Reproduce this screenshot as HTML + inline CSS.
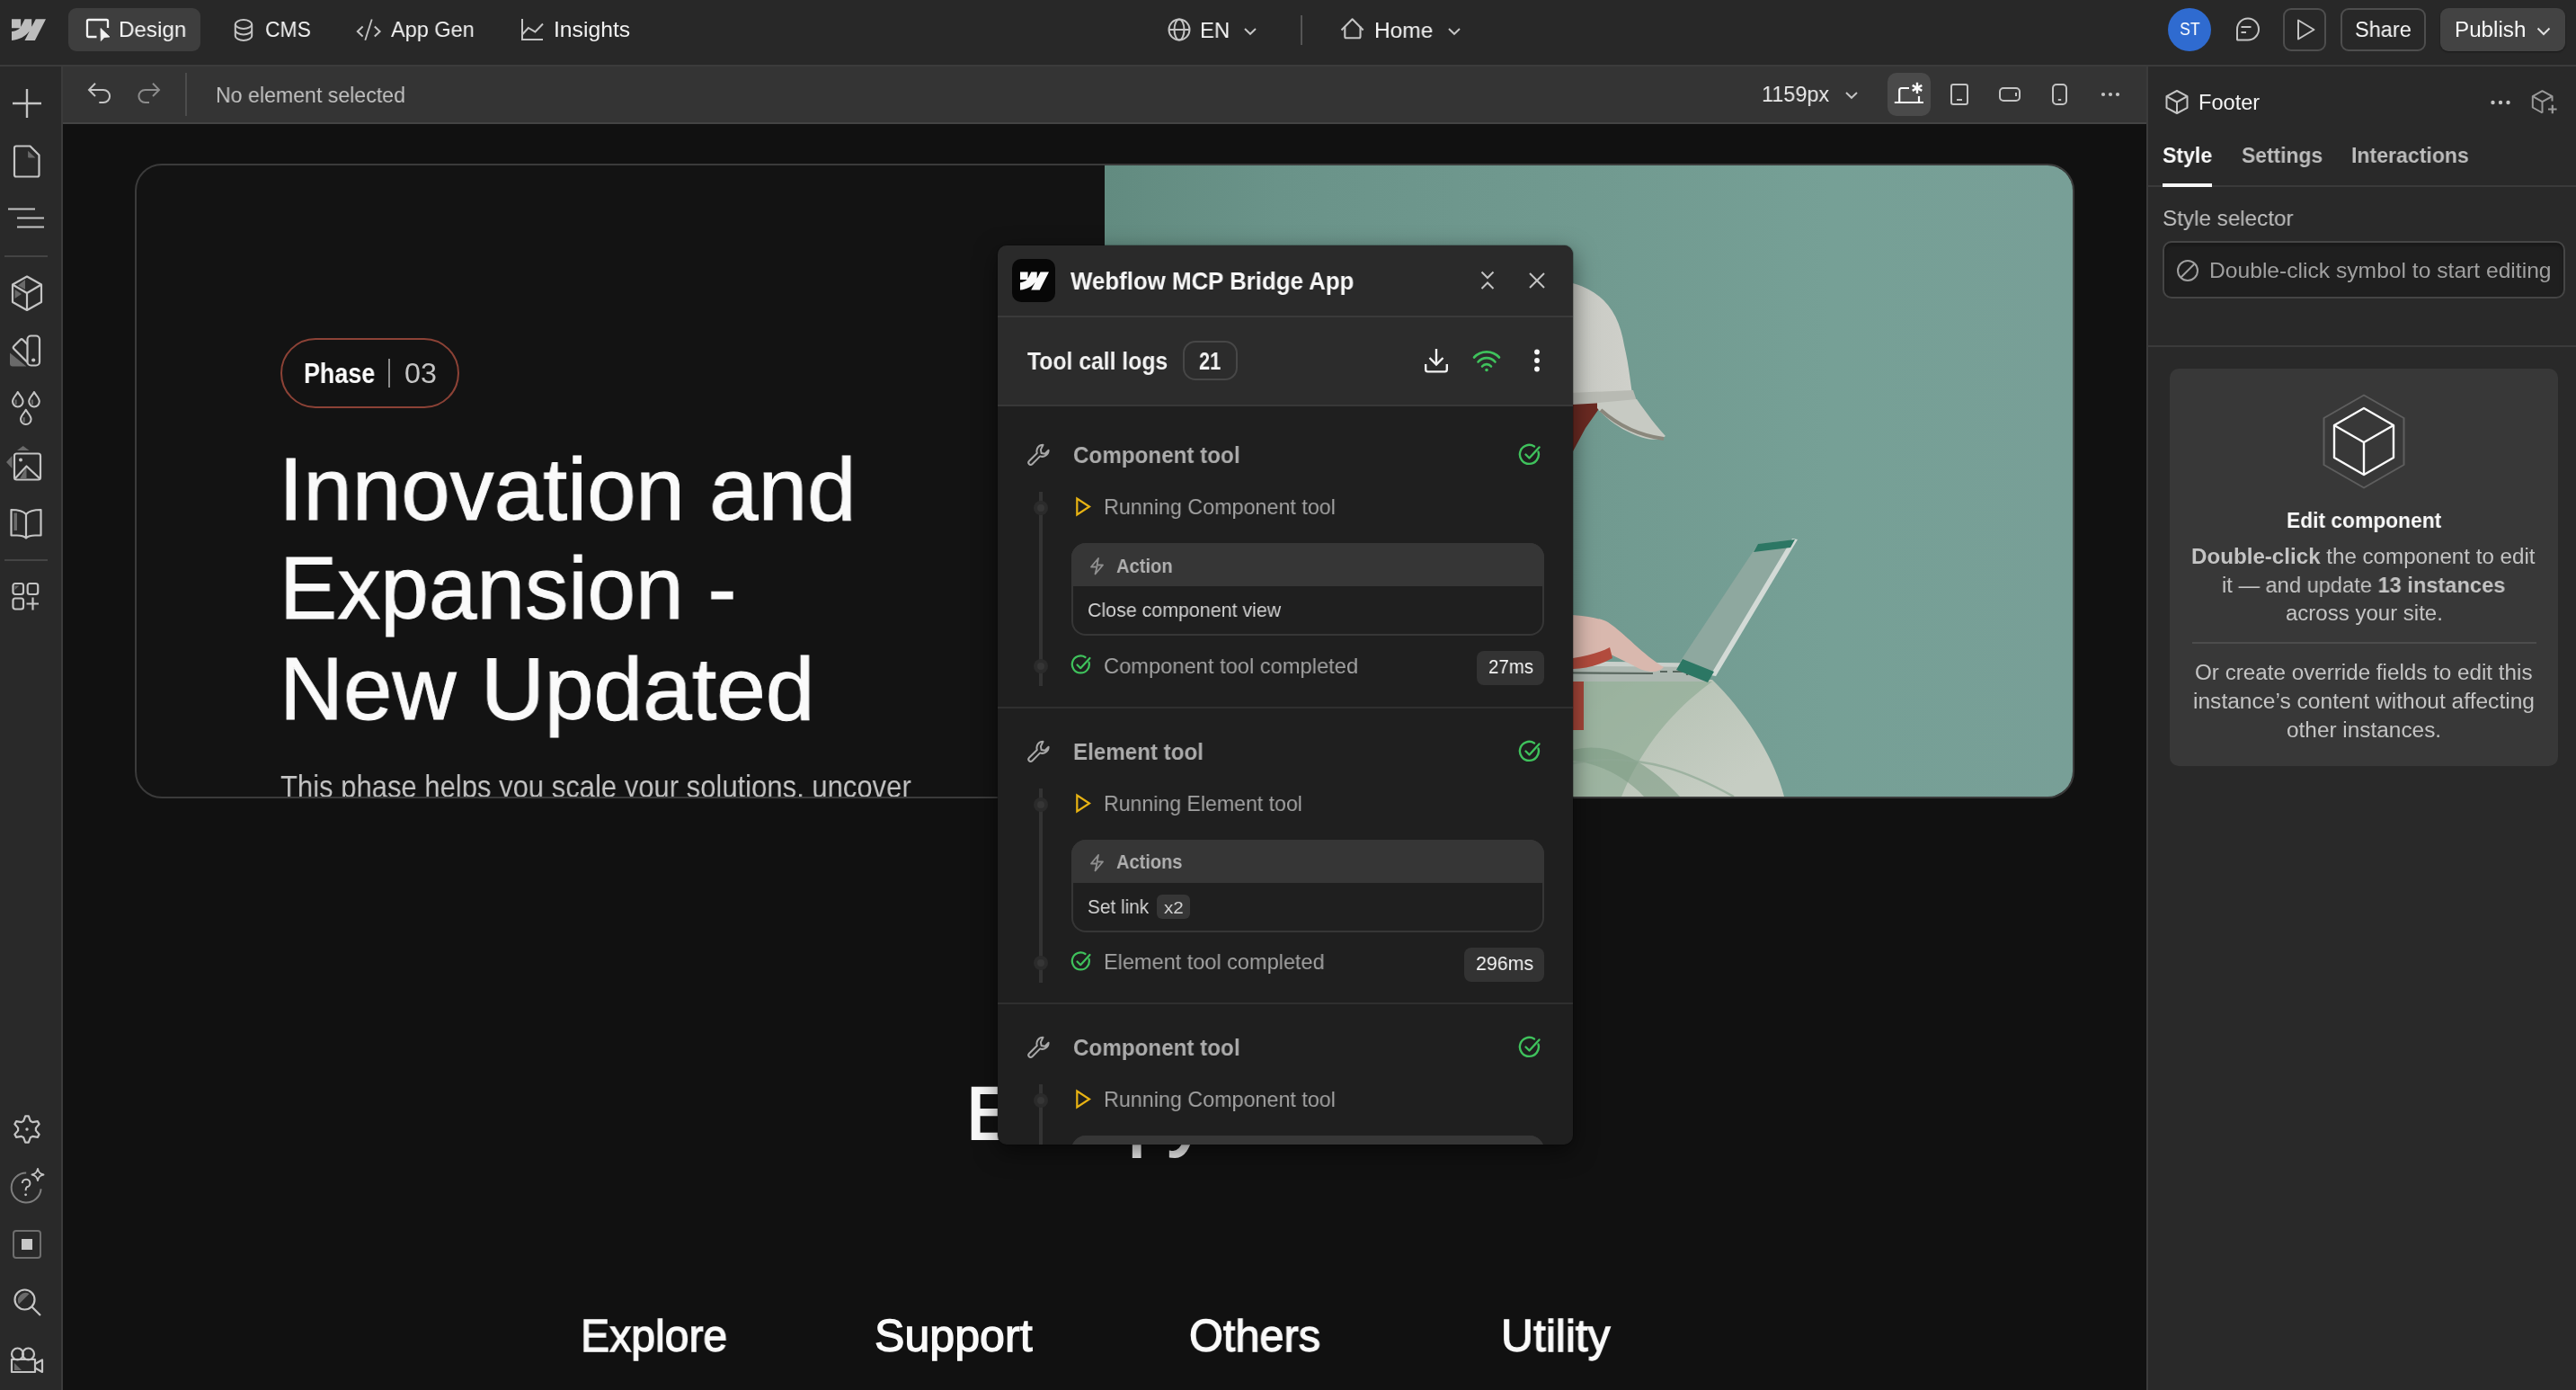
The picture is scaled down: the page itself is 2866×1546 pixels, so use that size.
<!DOCTYPE html>
<html><head><meta charset="utf-8"><style>
html,body{margin:0;padding:0;}
body{width:2866px;height:1546px;overflow:hidden;position:relative;background:#111;font-family:"Liberation Sans",sans-serif;}
.t{position:absolute;white-space:nowrap;line-height:1;will-change:transform;}
svg{display:block;}
</style></head><body>
<div style="position:absolute;left:0px;top:0px;width:2866px;height:72px;background:#282828"></div>
<div style="position:absolute;left:0px;top:72px;width:2866px;height:2px;background:#3b3b3b"></div>
<div style="position:absolute;left:0px;top:74px;width:68px;height:1472px;background:#292929"></div>
<div style="position:absolute;left:68px;top:74px;width:2px;height:1472px;background:#3b3b3b"></div>
<div style="position:absolute;left:70px;top:74px;width:2318px;height:62px;background:#343434"></div>
<div style="position:absolute;left:70px;top:136px;width:2318px;height:2px;background:#444"></div>
<div style="position:absolute;left:70px;top:138px;width:2318px;height:1408px;background:#111"></div>
<div style="position:absolute;left:2388px;top:74px;width:2px;height:1472px;background:#3b3b3b"></div>
<div style="position:absolute;left:2390px;top:74px;width:476px;height:1472px;background:#292929"></div>
<svg style="position:absolute;left:13px;top:21px;overflow:visible" width="38" height="24" viewBox="0 0 1080 675" fill="none"><path d="M1080 0L735.386 675H411.697L555.916 395.306H549.446C430.466 550.03 252.939 651.893 0 675V399.162C0 399.162 161.813 389.605 256.939 289.599H0V0.00526316H288.771V237.519L295.252 237.492L413.254 0.00526316H631.644V236.016L638.124 236.006L760.555 0H1080Z" fill="#bdbdbd"/></svg>
<div style="position:absolute;left:76px;top:9px;width:147px;height:48px;background:#3e3e3e;border-radius:9px"></div>
<svg style="position:absolute;left:95px;top:19px;" width="30" height="28" viewBox="0 0 30 28" fill="none"><path d="M12.5 22H3.5Q2 22 2 20.5V4.5Q2 3 3.5 3H23.5Q25 3 25 4.5V12" stroke="#f2f2f2" stroke-width="2.3"/><path d="M17 12.5L27 22L21 22.5L17.3 26.5Z" fill="#f2f2f2" stroke="#f2f2f2" stroke-width="0.8" stroke-linejoin="round"/></svg>
<div class="t" style="left:131.54px;top:21.08px;font-size:24.71px;font-weight:400;color:#f7f7f7;transform:scaleX(0.9782);transform-origin:0 0;">Design</div>
<svg style="position:absolute;left:259px;top:19px;" width="26" height="28" viewBox="0 0 26 28" fill="none"><ellipse cx="12" cy="8" rx="9.2" ry="4.9" stroke="#c4c4c4" stroke-width="2"/><path d="M2.8 8V21C2.8 23.7 6.9 25.9 12 25.9S21.2 23.7 21.2 21V8" stroke="#c4c4c4" stroke-width="2"/><path d="M2.8 14.5C2.8 17.2 6.9 19.4 12 19.4S21.2 17.2 21.2 14.5" stroke="#c4c4c4" stroke-width="2"/></svg>
<div class="t" style="left:295.07px;top:21.08px;font-size:24.71px;font-weight:400;color:#f2f2f2;transform:scaleX(0.9271);transform-origin:0 0;">CMS</div>
<svg style="position:absolute;left:394px;top:19px;" width="32" height="28" viewBox="0 0 32 28" fill="none"><path d="M9.6 10.5L3.8 16L9.6 21.5M22.8 10.5L28.6 16L22.8 21.5" stroke="#c4c4c4" stroke-width="2"/><path d="M19.7 2.5L12.3 25.8" stroke="#c4c4c4" stroke-width="1.8"/></svg>
<div class="t" style="left:435.00px;top:21.08px;font-size:24.71px;font-weight:400;color:#f2f2f2;transform:scaleX(0.9512);transform-origin:0 0;">App Gen</div>
<svg style="position:absolute;left:578px;top:19px;" width="30" height="28" viewBox="0 0 30 28" fill="none"><path d="M3 2V25H26" stroke="#c4c4c4" stroke-width="2"/><path d="M3.5 19L9.8 12L17.4 16.4L26 7.5" stroke="#c4c4c4" stroke-width="2"/></svg>
<div class="t" style="left:615.61px;top:21.08px;font-size:24.71px;font-weight:400;color:#f2f2f2;transform:scaleX(0.9959);transform-origin:0 0;">Insights</div>
<svg style="position:absolute;left:1298px;top:19px;" width="28" height="28" viewBox="0 0 28 28" fill="none"><circle cx="14" cy="14" r="11.5" stroke="#c4c4c4" stroke-width="2"/><ellipse cx="14" cy="14" rx="5.5" ry="11.5" stroke="#c4c4c4" stroke-width="2"/><path d="M2.5 14H25.5" stroke="#c4c4c4" stroke-width="2"/></svg>
<div class="t" style="left:1335.06px;top:21.58px;font-size:24.71px;font-weight:400;color:#f7f7f7;transform:scaleX(0.9683);transform-origin:0 0;">EN</div>
<svg style="position:absolute;left:1383px;top:29.5px;" width="16" height="10" viewBox="0 0 16 10" fill="none"><path d="M2 2L8 7.8L14 2" stroke="#c4c4c4" stroke-width="2"/></svg>
<div style="position:absolute;left:1447px;top:17px;width:2px;height:33px;background:#555"></div>
<svg style="position:absolute;left:1489px;top:18px;" width="32" height="28" viewBox="0 0 32 28" fill="none"><path d="M3.5 15.5L15.6 3.3L27.7 15.5" stroke="#c4c4c4" stroke-width="2.1" stroke-linejoin="round"/><path d="M7.3 11.5V22.8Q7.3 24.3 8.8 24.3H23Q24.5 24.3 24.5 22.8V11.5" stroke="#c4c4c4" stroke-width="2.1"/></svg>
<div class="t" style="left:1528.52px;top:21.58px;font-size:24.71px;font-weight:400;color:#f7f7f7;transform:scaleX(0.9901);transform-origin:0 0;">Home</div>
<svg style="position:absolute;left:1610px;top:29.5px;" width="16" height="10" viewBox="0 0 16 10" fill="none"><path d="M2 2L8 7.8L14 2" stroke="#c4c4c4" stroke-width="2"/></svg>
<div style="position:absolute;left:2412px;top:9px;width:48px;height:48px;background:#2f6bd0;border-radius:50%"></div>
<div class="t" style="left:2425.00px;top:23.06px;font-size:19.77px;font-weight:400;color:#fff;transform:scaleX(0.8938);transform-origin:0 0;">ST</div>
<svg style="position:absolute;left:2486px;top:17px;" width="30" height="30" viewBox="0 0 30 30" fill="none"><path d="M3 27V15.5A12 12 0 1 1 15 27.5H3.5Z" stroke="#c4c4c4" stroke-width="2" stroke-linejoin="round"/><path d="M7.5 13H18.5M7.5 19H13" stroke="#c4c4c4" stroke-width="2"/></svg>
<div style="position:absolute;left:2540px;top:9px;width:48px;height:48px;box-sizing:border-box;border:2px solid #4e4e4e;border-radius:9px"></div>
<svg style="position:absolute;left:2554px;top:20px;" width="24" height="26" viewBox="0 0 24 26" fill="none"><path d="M3 2.5V23.5L20.5 13Z" stroke="#c4c4c4" stroke-width="2" stroke-linejoin="round"/></svg>
<div style="position:absolute;left:2604px;top:9px;width:95px;height:48px;box-sizing:border-box;border:2px solid #4e4e4e;border-radius:9px"></div>
<div class="t" style="left:2620.02px;top:21.49px;font-size:23.98px;font-weight:400;color:#f7f7f7;transform:scaleX(0.9804);transform-origin:0 0;">Share</div>
<div style="position:absolute;left:2715px;top:9px;width:139px;height:48px;background:#434343;border-radius:9px;box-shadow:0 1px 2px rgba(0,0,0,.4)"></div>
<div class="t" style="left:2730.99px;top:21.49px;font-size:23.98px;font-weight:400;color:#f7f7f7;transform:scaleX(1.0094);transform-origin:0 0;">Publish</div>
<svg style="position:absolute;left:2822px;top:29.5px;" width="16" height="10" viewBox="0 0 16 10" fill="none"><path d="M1.5 1.5L8 8L14.5 1.5" stroke="#e0e0e0" stroke-width="2"/></svg>
<svg style="position:absolute;left:95px;top:89px;" width="30" height="30" viewBox="0 0 30 30" fill="none"><path d="M11 3.8L4 10.9L11 18" stroke="#c4c4c4" stroke-width="2"/><path d="M4.2 10.9H20A7.1 7.1 0 0 1 20 25.1H15.3" stroke="#c4c4c4" stroke-width="2"/></svg>
<svg style="position:absolute;left:151px;top:89px;" width="30" height="30" viewBox="0 0 30 30" fill="none"><path d="M19 3.8L26 10.9L19 18" stroke="#8c8c8c" stroke-width="2"/><path d="M25.8 10.9H10.5A7.1 7.1 0 0 0 10.5 25.1H15" stroke="#8c8c8c" stroke-width="2"/></svg>
<div style="position:absolute;left:206px;top:81px;width:2px;height:48px;background:#4c4c4c"></div>
<div class="t" style="left:239.73px;top:94.09px;font-size:23.98px;font-weight:400;color:#c2c2c2;transform:scaleX(0.9654);transform-origin:0 0;">No element selected</div>
<div class="t" style="left:1960.04px;top:93.12px;font-size:24.42px;font-weight:400;color:#ebebeb;transform:scaleX(0.9603);transform-origin:0 0;">1159px</div>
<svg style="position:absolute;left:2052px;top:101px;" width="16" height="10" viewBox="0 0 16 10" fill="none"><path d="M2 2L8 7.8L14 2" stroke="#c4c4c4" stroke-width="2"/></svg>
<div style="position:absolute;left:2100px;top:81px;width:48px;height:48px;background:#4a4a4a;border-radius:10px"></div>
<svg style="position:absolute;left:2104px;top:88px;" width="40" height="32" viewBox="0 0 40 32" fill="none"><path d="M3.8 26H36M9.2 26V12.5Q9.2 10 11.7 10H20" stroke="#fafafa" stroke-width="2.2"/><path d="M31 26V19" stroke="#fafafa" stroke-width="2.2"/><path d="M29 3.8V16M23.7 6.9L34.3 12.9M23.7 12.9L34.3 6.9" stroke="#fafafa" stroke-width="2.4"/></svg>
<svg style="position:absolute;left:2168px;top:91px;" width="24" height="28" viewBox="0 0 24 28" fill="none"><rect x="3" y="3" width="18" height="22" rx="2.2" stroke="#c4c4c4" stroke-width="2"/><path d="M9 20H15" stroke="#c4c4c4" stroke-width="2"/></svg>
<svg style="position:absolute;left:2222px;top:95px;" width="28" height="20" viewBox="0 0 28 20" fill="none"><rect x="3" y="3" width="22" height="14" rx="4" stroke="#c4c4c4" stroke-width="2"/><path d="M21 8V12" stroke="#c4c4c4" stroke-width="2"/></svg>
<svg style="position:absolute;left:2281px;top:91px;" width="21" height="28" viewBox="0 0 21 28" fill="none"><rect x="3" y="3" width="15" height="22" rx="4" stroke="#c4c4c4" stroke-width="2"/><path d="M8.8 20H12.2" stroke="#c4c4c4" stroke-width="2"/></svg>
<svg style="position:absolute;left:2336px;top:101px;" width="24" height="8" viewBox="0 0 24 8" fill="none"><circle cx="4" cy="4" r="2.1" fill="#c4c4c4"/><circle cx="12" cy="4" r="2.1" fill="#c4c4c4"/><circle cx="20" cy="4" r="2.1" fill="#c4c4c4"/></svg>
<svg style="position:absolute;left:12px;top:97px;" width="36" height="36" viewBox="0 0 36 36" fill="none"><path d="M18 2V34M2 18H34" stroke="#c4c4c4" stroke-width="2.4"/></svg>
<svg style="position:absolute;left:13px;top:159px;" width="34" height="42" viewBox="0 0 34 42" fill="none"><path d="M5 3.5H20.5L30.5 13.5V35.5A2 2 0 0 1 28.5 37.5H5A2 2 0 0 1 3 35.5V5.5A2 2 0 0 1 5 3.5Z" stroke="#c4c4c4" stroke-width="2.2" stroke-linejoin="round"/><path d="M18.1 8.7V15.5Q18.1 16.5 19.1 16.5H26.5Z" fill="#6a6a6a"/></svg>
<svg style="position:absolute;left:7px;top:229px;" width="46" height="28" viewBox="0 0 46 28" fill="none"><path d="M2 3.5H32M12 13.5H42M12 23.5H42" stroke="#c4c4c4" stroke-width="2.2"/></svg>
<div style="position:absolute;left:5px;top:284px;width:48px;height:2px;background:#444"></div>
<svg style="position:absolute;left:11px;top:305px;" width="38" height="44" viewBox="0 0 38 44" fill="none"><path d="M19 2.5L35 11.5V31L19 40L3 31V11.5Z" stroke="#c4c4c4" stroke-width="2.2" stroke-linejoin="round"/><path d="M3 11.5L19 21V40M35 11.5L19 21" stroke="#c4c4c4" stroke-width="2.2" stroke-linejoin="round"/><path d="M17 6V17L9 12.5Z" fill="#6a6a6a"/><path d="M5.5 17V27L13 22Z" fill="#6a6a6a"/></svg>
<svg style="position:absolute;left:9px;top:369px;" width="40" height="42" viewBox="0 0 40 42" fill="none"><path d="M2 23.5L20.5 38.5H5Q2 38.5 2 35.5Z" fill="#6a6a6a"/><rect x="21.5" y="4.5" width="13.5" height="33" rx="4" stroke="#c4c4c4" stroke-width="2.2"/><path d="M21.5 14L16.5 9Q15 7.5 13.5 9L6.5 16Q5 17.5 6.5 19L21.5 34" stroke="#c4c4c4" stroke-width="2.2" stroke-linejoin="round"/><circle cx="28.2" cy="31.5" r="2.1" fill="#c4c4c4"/></svg>
<svg style="position:absolute;left:10px;top:430px;" width="40" height="48" viewBox="0 0 40 48" fill="none"><path d="M9.8 6C8.3 9.5 4.000000000000001 12.5 4.000000000000001 16.599999999999998A5.8 5.8 0 0 0 15.600000000000001 16.599999999999998C15.600000000000001 12.5 11.3 9.5 9.8 6Z" stroke="#c4c4c4" stroke-width="2" stroke-linejoin="round"/><path d="M7.6000000000000005 14.5V20" stroke="#6a6a6a" stroke-width="2.2"/><path d="M28 6C26.5 9.5 22.2 12.5 22.2 16.599999999999998A5.8 5.8 0 0 0 33.8 16.599999999999998C33.8 12.5 29.5 9.5 28 6Z" stroke="#c4c4c4" stroke-width="2" stroke-linejoin="round"/><path d="M25.8 14.5V20" stroke="#6a6a6a" stroke-width="2.2"/><path d="M18.8 25.7C17.3 29.2 13.0 32.2 13.0 36.3A5.8 5.8 0 0 0 24.6 36.3C24.6 32.2 20.3 29.2 18.8 25.7Z" stroke="#c4c4c4" stroke-width="2" stroke-linejoin="round"/><path d="M16.6 34.2V39.7" stroke="#6a6a6a" stroke-width="2.2"/></svg>
<svg style="position:absolute;left:5px;top:493px;" width="44" height="44" viewBox="0 0 44 44" fill="none"><path d="M14 8L20.7 3L27.5 8Z" fill="#6a6a6a"/><path d="M2 21L8.5 14V28Z" fill="#6a6a6a"/><rect x="11" y="11.5" width="29" height="29" rx="2.5" stroke="#c4c4c4" stroke-width="2.2"/><path d="M24.5 26V39.5H17Z" fill="#6a6a6a"/><path d="M12 39L24.5 25.5L39 39" stroke="#c4c4c4" stroke-width="2.2" stroke-linejoin="round"/><circle cx="18" cy="18.5" r="2" fill="#c4c4c4"/></svg>
<svg style="position:absolute;left:9px;top:563px;" width="40" height="40" viewBox="0 0 40 40" fill="none"><path d="M20 9C16.5 5 11 4 3.5 4V32.5H10C14.5 32.5 18 33.5 20 35.5C22 33.5 25.5 32.5 30 32.5H36.5V4C29 4 23.5 5 20 9ZM20 9V35" stroke="#c4c4c4" stroke-width="2.2" stroke-linejoin="round"/><path d="M6.5 7.5H10V27H6.5Z" fill="#6a6a6a"/></svg>
<div style="position:absolute;left:5px;top:622px;width:48px;height:2px;background:#444"></div>
<svg style="position:absolute;left:11px;top:646px;" width="36" height="36" viewBox="0 0 36 36" fill="none"><rect x="3.5" y="3" width="11.5" height="12" rx="2.5" stroke="#c4c4c4" stroke-width="2.2"/><rect x="19.7" y="3" width="11.5" height="12" rx="2.5" stroke="#c4c4c4" stroke-width="2.2"/><rect x="3.5" y="19.5" width="11.5" height="12" rx="2.5" stroke="#c4c4c4" stroke-width="2.2"/><path d="M25.5 18.5V32.5M18.5 25.5H32" stroke="#c4c4c4" stroke-width="2.2"/><path d="M5.5 5.5H10.5L5.5 10Z" fill="#6a6a6a"/></svg>
<svg style="position:absolute;left:14px;top:1240px;" width="32" height="32" viewBox="0 0 32 32" fill="none"><path d="M14.20 1.31 L17.80 1.31 L19.75 6.73 L22.16 8.12 L27.82 7.09 L29.62 10.22 L25.90 14.61 L25.90 17.39 L29.62 21.78 L27.82 24.91 L22.16 23.88 L19.75 25.27 L17.80 30.69 L14.20 30.69 L12.25 25.27 L9.84 23.88 L4.18 24.91 L2.38 21.78 L6.10 17.39 L6.10 14.61 L2.38 10.22 L4.18 7.09 L9.84 8.12 L12.25 6.73Z" stroke="#c4c4c4" stroke-width="2.2" stroke-linejoin="round"/><circle cx="16" cy="16" r="1.7" fill="#c4c4c4"/></svg>
<svg style="position:absolute;left:10px;top:1296px;" width="44" height="46" viewBox="0 0 44 46" fill="none"><path d="M19.2 8.5A16.5 16.5 0 1 0 35.6 26.4" stroke="#7e7e7e" stroke-width="2"/><path d="M14.8 20A4.3 4.3 0 1 1 19.8 24.3C18.8 24.9 18.6 25.9 18.6 28.2" stroke="#c4c4c4" stroke-width="2"/><circle cx="18.6" cy="32.8" r="1.4" fill="#c4c4c4"/><path d="M32 4C32.9 8 34.2 9.6 38.5 10.5C34.2 11.4 32.9 13 32 17C31.1 13 29.8 11.4 25.5 10.5C29.8 9.6 31.1 8 32 4Z" stroke="#c4c4c4" stroke-width="1.9" stroke-linejoin="round"/></svg>
<svg style="position:absolute;left:13px;top:1367px;" width="34" height="34" viewBox="0 0 34 34" fill="none"><rect x="2" y="2" width="30" height="30" rx="3" stroke="#6e6e6e" stroke-width="2"/><rect x="11" y="11" width="12" height="12" fill="#c8c8c8"/></svg>
<svg style="position:absolute;left:14px;top:1432px;" width="34" height="34" viewBox="0 0 34 34" fill="none"><circle cx="13.5" cy="13.5" r="11" stroke="#c4c4c4" stroke-width="2.2"/><path d="M7 18.5A8.5 8.5 0 0 1 18.5 7Z" fill="#6a6a6a"/><path d="M21.5 21.5L31 31" stroke="#c4c4c4" stroke-width="2.2"/></svg>
<svg style="position:absolute;left:10px;top:1496px;" width="40" height="34" viewBox="0 0 40 34" fill="none"><path d="M3 16H29V30H3Z" stroke="#c4c4c4" stroke-width="2.2" stroke-linejoin="round"/><circle cx="9.5" cy="10" r="6.5" stroke="#c4c4c4" stroke-width="2.2"/><circle cx="21.5" cy="10" r="6.5" stroke="#c4c4c4" stroke-width="2.2"/><path d="M29 21L37 16.5V30L29 25.5" stroke="#c4c4c4" stroke-width="2.2" stroke-linejoin="round"/><path d="M6 28V20L14 28Z" fill="#6a6a6a"/></svg>
<div style="position:absolute;left:150px;top:182px;width:2158px;height:706px;box-sizing:border-box;border:2px solid #3b3b3b;border-radius:30px;background:#131313;overflow:hidden">
<div style="position:absolute;left:1077px;top:0px;width:1077px;height:702px;overflow:hidden;background:linear-gradient(90deg,#628b80 0%,#6a9389 18%,#719a90 50%,#76a096 75%,#789f97 100%)">
<svg style="position:absolute;left:0px;top:0px;" width="1077" height="702" viewBox="0 0 1077 702" fill="none">
<defs>
 <linearGradient id="pants" x1="0" y1="0" x2="1" y2="0.6"><stop offset="0" stop-color="#a3b9a6"/><stop offset="0.45" stop-color="#b7c3b5"/><stop offset="1" stop-color="#c6cdc3"/></linearGradient>
 <linearGradient id="cap" x1="0" y1="0" x2="1" y2="0"><stop offset="0" stop-color="#c2c4be"/><stop offset="1" stop-color="#cfd0ca"/></linearGradient>
</defs>
<!-- dark red under brim -->
<path d="M450 262 L556 262 L535 292 L521 318 L450 318Z" fill="#6b2a22"/>
<!-- cap dome -->
<path d="M450 128 C540 118 570 150 578 200 C584 225 585 245 588 258 L450 266Z" fill="url(#cap)"/>
<path d="M450 256 L588 250 L592 262 L450 270Z" fill="#b8bab3"/>
<!-- brim -->
<path d="M548 264 L592 260 C603 276 614 290 624 301 C615 308 600 305 582 296 C566 288 555 278 548 270Z" fill="#c7cac3"/>
<path d="M552 272 C570 288 592 300 622 304" stroke="#8a877c" stroke-width="4" fill="none"/>
<!-- red sleeve -->
<path d="M450 505 L532 512 L536 560 L530 630 L450 630Z" fill="#a84438"/>
<!-- pants -->
<path d="M450 572 L676 572 C715 610 745 660 756 702 L450 702Z" fill="url(#pants)"/>
<path d="M450 574 L676 574 C640 600 600 640 575 702 L450 702Z" fill="#93ad98" opacity=".75"/>
<path d="M521 650 C560 640 600 660 640 702 L600 702 C580 680 550 665 521 662Z" fill="#7f9c86" opacity=".6"/>
<path d="M450 520 L533 520 L533 628 L450 628Z" fill="#a8473a"/>
<path d="M521 665 C600 650 660 680 700 702" stroke="#8ea894" stroke-width="2.5" fill="none" opacity=".7"/>
<!-- laptop base -->
<path d="M450 550 L672 554 L668 574 L450 574Z" fill="#adb8b1"/>
<path d="M450 550 L672 554 L671 558 L450 556Z" fill="#c9d0cb"/>
<path d="M475 564 L610 565" stroke="#59675f" stroke-width="2.2"/>
<path d="M618 563 H626 M632 563 H644 M648 562 V567" stroke="#59675f" stroke-width="2.2"/>
<!-- screen -->
<path d="M727 421 L768 416 L677 566 L640 552Z" fill="#8ea89f"/>
<path d="M765 415 L771 416 L680 568 L674 567Z" fill="#d3dad6"/>
<path d="M727 421 L768 416 L763 425 L722 430Z" fill="#2c7764"/>
<path d="M643 549 L678 563 L671 575 L636 561Z" fill="#2c7764"/>
<!-- hand -->
<path d="M450 500 C490 498 540 498 560 508 C578 520 600 545 622 558 C616 566 600 564 588 556 L555 540 C540 548 520 552 450 556Z" fill="#d9b8ae"/>
<path d="M521 548 C540 545 555 540 562 536 L565 548 C550 556 535 560 521 560Z" fill="#b24b3d"/>
</svg>
</div>
<div style="position:absolute;left:160px;top:192px;width:199px;height:78px;box-sizing:border-box;border:2px solid #8c4236;border-radius:40px"></div>
<div class="t" style="left:185.64px;top:216.16px;font-size:30.52px;font-weight:700;color:#fafafa;transform:scaleX(0.8811);transform-origin:0 0;">Phase</div>
<div style="position:absolute;left:280px;top:215px;width:2px;height:32px;background:#8c8c8c"></div>
<div class="t" style="left:297.84px;top:216.16px;font-size:30.52px;font-weight:400;color:#c4c4c4;transform:scaleX(1.0572);transform-origin:0 0;">03</div>
<div class="t" style="left:158.08px;top:311.11px;font-size:98.84px;font-weight:400;color:#fafafa;transform:scaleX(0.9909);transform-origin:0 0;-webkit-text-stroke:0.9px #fafafa">Innovation and</div>
<div class="t" style="left:159.21px;top:421.21px;font-size:98.84px;font-weight:400;color:#fafafa;transform:scaleX(0.9742);transform-origin:0 0;-webkit-text-stroke:0.9px #fafafa">Expansion -</div>
<div class="t" style="left:159.05px;top:532.61px;font-size:98.84px;font-weight:400;color:#fafafa;transform:scaleX(0.9943);transform-origin:0 0;-webkit-text-stroke:0.9px #fafafa">New Updated</div>
<div class="t" style="left:160.10px;top:673.09px;font-size:35.32px;font-weight:400;color:#c4c4c4;transform:scaleX(0.8783);transform-origin:0 0;">This phase helps you scale your solutions, uncover</div>
</div>
<div class="t" style="left:1074.60px;top:1198.45px;font-size:82.85px;font-weight:400;color:#fafafa;-webkit-text-stroke:2px #fafafa">E</div>
<div class="t" style="left:1255.00px;top:1194.76px;font-size:87.21px;font-weight:400;color:#f0f0f0;-webkit-text-stroke:2px #f0f0f0">p</div>
<div class="t" style="left:1299.00px;top:1194.76px;font-size:87.21px;font-weight:400;color:#f0f0f0;-webkit-text-stroke:2px #f0f0f0">y</div>
<div class="t" style="left:645.76px;top:1460.84px;font-size:50.15px;font-weight:400;color:#fafafa;transform:scaleX(0.9605);transform-origin:0 0;-webkit-text-stroke:1.3px #fafafa">Explore</div>
<div class="t" style="left:973.40px;top:1460.84px;font-size:50.15px;font-weight:400;color:#fafafa;-webkit-text-stroke:1.3px #fafafa">Support</div>
<div class="t" style="left:1322.66px;top:1460.84px;font-size:50.15px;font-weight:400;color:#fafafa;transform:scaleX(0.9704);transform-origin:0 0;-webkit-text-stroke:1.3px #fafafa">Others</div>
<div class="t" style="left:1669.52px;top:1460.84px;font-size:50.15px;font-weight:400;color:#fafafa;transform:scaleX(0.9920);transform-origin:0 0;-webkit-text-stroke:1.3px #fafafa">Utility</div>
<div style="position:absolute;left:1110px;top:273px;width:640px;height:1000px;background:#1f1f1f;border-radius:10px;overflow:hidden;box-shadow:0 8px 26px rgba(0,0,0,.5),0 0 0 1px rgba(0,0,0,.2)">
<div style="position:absolute;left:0px;top:0px;width:640px;height:78px;background:#2a2a2a"></div>
<div style="position:absolute;left:0px;top:78px;width:640px;height:2px;background:#3a3a3a"></div>
<div style="position:absolute;left:0px;top:80px;width:640px;height:97px;background:#2c2c2c"></div>
<div style="position:absolute;left:0px;top:177px;width:640px;height:2px;background:#383838"></div>
<div style="position:absolute;left:16px;top:15px;width:48px;height:48px;background:#070707;border-radius:10px"></div>
<svg style="position:absolute;left:25px;top:29px;" width="32" height="21" viewBox="0 0 1080 675" fill="none"><path d="M1080 0L735.386 675H411.697L555.916 395.306H549.446C430.466 550.03 252.939 651.893 0 675V399.162C0 399.162 161.813 389.605 256.939 289.599H0V0.00526316H288.771V237.519L295.252 237.492L413.254 0.00526316H631.644V236.016L638.124 236.006L760.555 0H1080Z" fill="#fafafa"/></svg>
<div class="t" style="left:81.00px;top:25.82px;font-size:27.62px;font-weight:700;color:#f7f7f7;transform:scaleX(0.9360);transform-origin:0 0;">Webflow MCP Bridge App</div>
<svg style="position:absolute;left:535px;top:27px;" width="20" height="24" viewBox="0 0 20 24" fill="none"><path d="M3.5 2.5L10 9L16.5 2.5M3.5 21L10 14.5L16.5 21" stroke="#c4c4c4" stroke-width="2"/></svg>
<svg style="position:absolute;left:589px;top:28px;" width="22" height="22" viewBox="0 0 22 22" fill="none"><path d="M3 3L19 19M19 3L3 19" stroke="#c4c4c4" stroke-width="2"/></svg>
<div class="t" style="left:33.00px;top:114.62px;font-size:27.62px;font-weight:700;color:#f2f2f2;transform:scaleX(0.8959);transform-origin:0 0;">Tool call logs</div>
<div style="position:absolute;left:206px;top:106px;width:61px;height:44px;box-sizing:border-box;border:2px solid #474747;border-radius:14px"></div>
<div class="t" style="left:224.00px;top:114.62px;font-size:27.62px;font-weight:700;color:#f2f2f2;transform:scaleX(0.7906);transform-origin:0 0;">21</div>
<svg style="position:absolute;left:472px;top:112px;" width="32" height="32" viewBox="0 0 32 32" fill="none"><path d="M16 3V20M8.5 13L16 20.5L23.5 13" stroke="#f2f2f2" stroke-width="2.4"/><path d="M4.2 20V26Q4.2 28.4 6.6 28.4H25.4Q27.8 28.4 27.8 26V20" stroke="#f2f2f2" stroke-width="2.4"/></svg>
<svg style="position:absolute;left:527px;top:114px;" width="34" height="28" viewBox="0 0 34 28" fill="none"><path d="M3 10.5A19 19 0 0 1 31 10.5" stroke="#3fc25c" stroke-width="2.6" stroke-linecap="round"/><path d="M7.5 15.5A12.5 12.5 0 0 1 26.5 15.5" stroke="#3fc25c" stroke-width="2.6" stroke-linecap="round"/><path d="M12 20.5A6.5 6.5 0 0 1 22 20.5" stroke="#3fc25c" stroke-width="2.6" stroke-linecap="round"/><circle cx="17" cy="24.5" r="1.8" fill="#3fc25c"/></svg>
<svg style="position:absolute;left:594px;top:113px;" width="12" height="30" viewBox="0 0 12 30" fill="none"><circle cx="6" cy="5.5" r="2.9" fill="#f7f7f7"/><circle cx="6" cy="15" r="2.9" fill="#f7f7f7"/><circle cx="6" cy="24.5" r="2.9" fill="#f7f7f7"/></svg>
<svg style="position:absolute;left:32px;top:219px;" width="28" height="28" viewBox="0 0 28 28" fill="none"><path d="M18.5 2.8A7 7 0 0 0 11.8 12L3 20.8A2.4 2.4 0 0 0 6.4 24.2L15.2 15.4A7 7 0 0 0 24.6 8.7L20.6 12.7L16.6 12.1L15.9 8.1Z" stroke="#a8a8a8" stroke-width="2" stroke-linejoin="round"/></svg>
<div class="t" style="left:83.55px;top:221.26px;font-size:25.44px;font-weight:700;color:#acacac;transform:scaleX(0.9518);transform-origin:0 0;">Component tool</div>
<svg style="position:absolute;left:579px;top:220px;" width="30" height="28" viewBox="0 0 30 28" fill="none"><path d="M22.5 9.5A10.5 10.5 0 1 1 18 3.5" stroke="#3fc25c" stroke-width="2.4" stroke-linecap="round"/><path d="M8.5 12.5L12.5 16.5L23.5 4.5" stroke="#3fc25c" stroke-width="2.4" stroke-linecap="round" stroke-linejoin="round"/></svg>
<div style="position:absolute;left:46px;top:274px;width:4px;height:216px;background:#333"></div>
<div style="position:absolute;left:40px;top:284px;width:16px;height:16px;background:#2b2b2b;border-radius:50%"></div>
<div style="position:absolute;left:44px;top:288px;width:8px;height:8px;background:#363636;border-radius:50%"></div>
<div style="position:absolute;left:40px;top:460px;width:16px;height:16px;background:#2b2b2b;border-radius:50%"></div>
<div style="position:absolute;left:44px;top:464px;width:8px;height:8px;background:#363636;border-radius:50%"></div>
<svg style="position:absolute;left:86px;top:279px;" width="20" height="23" viewBox="0 0 20 23" fill="none"><path d="M2.3 2.5V20.5L16 11.5Z" stroke="#e8b313" stroke-width="2.2" stroke-linejoin="miter"/></svg>
<div class="t" style="left:117.53px;top:279.17px;font-size:24.13px;font-weight:400;color:#a2a2a2;transform:scaleX(0.9665);transform-origin:0 0;">Running Component tool</div>
<div style="position:absolute;left:82px;top:331px;width:526px;height:103px;box-sizing:border-box;border:2px solid #363636;border-radius:16px;background:#1f1f1f;overflow:hidden"></div>
<div style="position:absolute;left:82px;top:331px;width:526px;height:48px;background:#363636;border-radius:16px 16px 0 0"></div>
<svg style="position:absolute;left:101px;top:346px;" width="19" height="21" viewBox="0 0 19 21" fill="none"><path d="M11 2L3 11.5H9.5L7.5 19.5L16 9.5H9.5Z" stroke="#8f8f8f" stroke-width="1.8" stroke-linejoin="round"/></svg>
<div class="t" style="left:132.00px;top:345.62px;font-size:22.53px;font-weight:700;color:#b0b0b0;transform:scaleX(0.8948);transform-origin:0 0;">Action</div>
<div class="t" style="left:99.63px;top:395.49px;font-size:22.09px;font-weight:400;color:#d2d2d2;transform:scaleX(0.9685);transform-origin:0 0;">Close component view</div>
<svg style="position:absolute;left:81px;top:455px;" width="26" height="26" viewBox="0 0 26 26" fill="none"><path d="M20.5 8.5A9.5 9.5 0 1 1 16.5 3" stroke="#3fc25c" stroke-width="2.2" stroke-linecap="round"/><path d="M7.5 11.5L11.2 15.2L21.5 4" stroke="#3fc25c" stroke-width="2.2" stroke-linecap="round" stroke-linejoin="round"/></svg>
<div class="t" style="left:117.52px;top:455.97px;font-size:24.13px;font-weight:400;color:#a2a2a2;transform:scaleX(0.9817);transform-origin:0 0;">Component tool completed</div>
<div style="position:absolute;left:533px;top:451px;width:75px;height:38px;background:#333;border-radius:8px"></div>
<div class="t" style="left:545.59px;top:458.42px;font-size:22.53px;font-weight:400;color:#f5f5f5;transform:scaleX(0.9108);transform-origin:0 0;">27ms</div>
<div style="position:absolute;left:0px;top:513px;width:640px;height:2px;background:#2f2f2f"></div>
<svg style="position:absolute;left:32px;top:548.5px;" width="28" height="28" viewBox="0 0 28 28" fill="none"><path d="M18.5 2.8A7 7 0 0 0 11.8 12L3 20.8A2.4 2.4 0 0 0 6.4 24.2L15.2 15.4A7 7 0 0 0 24.6 8.7L20.6 12.7L16.6 12.1L15.9 8.1Z" stroke="#a8a8a8" stroke-width="2" stroke-linejoin="round"/></svg>
<div class="t" style="left:83.55px;top:550.76px;font-size:25.44px;font-weight:700;color:#acacac;transform:scaleX(0.9496);transform-origin:0 0;">Element tool</div>
<svg style="position:absolute;left:579px;top:549.5px;" width="30" height="28" viewBox="0 0 30 28" fill="none"><path d="M22.5 9.5A10.5 10.5 0 1 1 18 3.5" stroke="#3fc25c" stroke-width="2.4" stroke-linecap="round"/><path d="M8.5 12.5L12.5 16.5L23.5 4.5" stroke="#3fc25c" stroke-width="2.4" stroke-linecap="round" stroke-linejoin="round"/></svg>
<div style="position:absolute;left:46px;top:603.5px;width:4px;height:216px;background:#333"></div>
<div style="position:absolute;left:40px;top:613.5px;width:16px;height:16px;background:#2b2b2b;border-radius:50%"></div>
<div style="position:absolute;left:44px;top:617.5px;width:8px;height:8px;background:#363636;border-radius:50%"></div>
<div style="position:absolute;left:40px;top:789.5px;width:16px;height:16px;background:#2b2b2b;border-radius:50%"></div>
<div style="position:absolute;left:44px;top:793.5px;width:8px;height:8px;background:#363636;border-radius:50%"></div>
<svg style="position:absolute;left:86px;top:608.5px;" width="20" height="23" viewBox="0 0 20 23" fill="none"><path d="M2.3 2.5V20.5L16 11.5Z" stroke="#e8b313" stroke-width="2.2" stroke-linejoin="miter"/></svg>
<div class="t" style="left:117.54px;top:608.67px;font-size:24.13px;font-weight:400;color:#a2a2a2;transform:scaleX(0.9576);transform-origin:0 0;">Running Element tool</div>
<div style="position:absolute;left:82px;top:660.5px;width:526px;height:103px;box-sizing:border-box;border:2px solid #363636;border-radius:16px;background:#1f1f1f;overflow:hidden"></div>
<div style="position:absolute;left:82px;top:660.5px;width:526px;height:48px;background:#363636;border-radius:16px 16px 0 0"></div>
<svg style="position:absolute;left:101px;top:675.5px;" width="19" height="21" viewBox="0 0 19 21" fill="none"><path d="M11 2L3 11.5H9.5L7.5 19.5L16 9.5H9.5Z" stroke="#8f8f8f" stroke-width="1.8" stroke-linejoin="round"/></svg>
<div class="t" style="left:132.00px;top:675.12px;font-size:22.53px;font-weight:700;color:#b0b0b0;transform:scaleX(0.8898);transform-origin:0 0;">Actions</div>
<div class="t" style="left:99.66px;top:724.99px;font-size:22.09px;font-weight:400;color:#d2d2d2;transform:scaleX(0.9425);transform-origin:0 0;">Set link</div>
<div style="position:absolute;left:177px;top:722.0px;width:37px;height:27px;background:#363636;border-radius:6px"></div>
<div class="t" style="left:185.00px;top:729.23px;font-size:17.44px;font-weight:400;color:#cfcfcf;transform:scaleX(1.1852);transform-origin:0 0;">x2</div>
<svg style="position:absolute;left:81px;top:784.5px;" width="26" height="26" viewBox="0 0 26 26" fill="none"><path d="M20.5 8.5A9.5 9.5 0 1 1 16.5 3" stroke="#3fc25c" stroke-width="2.2" stroke-linecap="round"/><path d="M7.5 11.5L11.2 15.2L21.5 4" stroke="#3fc25c" stroke-width="2.2" stroke-linecap="round" stroke-linejoin="round"/></svg>
<div class="t" style="left:117.53px;top:785.47px;font-size:24.13px;font-weight:400;color:#a2a2a2;transform:scaleX(0.9742);transform-origin:0 0;">Element tool completed</div>
<div style="position:absolute;left:519px;top:780.5px;width:89px;height:38px;background:#333;border-radius:8px"></div>
<div class="t" style="left:531.55px;top:787.92px;font-size:22.53px;font-weight:400;color:#f5f5f5;transform:scaleX(0.9499);transform-origin:0 0;">296ms</div>
<div style="position:absolute;left:0px;top:842px;width:640px;height:2px;background:#2f2f2f"></div>
<svg style="position:absolute;left:32px;top:878px;" width="28" height="28" viewBox="0 0 28 28" fill="none"><path d="M18.5 2.8A7 7 0 0 0 11.8 12L3 20.8A2.4 2.4 0 0 0 6.4 24.2L15.2 15.4A7 7 0 0 0 24.6 8.7L20.6 12.7L16.6 12.1L15.9 8.1Z" stroke="#a8a8a8" stroke-width="2" stroke-linejoin="round"/></svg>
<div class="t" style="left:83.55px;top:880.26px;font-size:25.44px;font-weight:700;color:#acacac;transform:scaleX(0.9518);transform-origin:0 0;">Component tool</div>
<svg style="position:absolute;left:579px;top:879px;" width="30" height="28" viewBox="0 0 30 28" fill="none"><path d="M22.5 9.5A10.5 10.5 0 1 1 18 3.5" stroke="#3fc25c" stroke-width="2.4" stroke-linecap="round"/><path d="M8.5 12.5L12.5 16.5L23.5 4.5" stroke="#3fc25c" stroke-width="2.4" stroke-linecap="round" stroke-linejoin="round"/></svg>
<div style="position:absolute;left:46px;top:933px;width:4px;height:216px;background:#333"></div>
<div style="position:absolute;left:40px;top:943px;width:16px;height:16px;background:#2b2b2b;border-radius:50%"></div>
<div style="position:absolute;left:44px;top:947px;width:8px;height:8px;background:#363636;border-radius:50%"></div>
<div style="position:absolute;left:40px;top:1119px;width:16px;height:16px;background:#2b2b2b;border-radius:50%"></div>
<div style="position:absolute;left:44px;top:1123px;width:8px;height:8px;background:#363636;border-radius:50%"></div>
<svg style="position:absolute;left:86px;top:938px;" width="20" height="23" viewBox="0 0 20 23" fill="none"><path d="M2.3 2.5V20.5L16 11.5Z" stroke="#e8b313" stroke-width="2.2" stroke-linejoin="miter"/></svg>
<div class="t" style="left:117.53px;top:938.17px;font-size:24.13px;font-weight:400;color:#a2a2a2;transform:scaleX(0.9665);transform-origin:0 0;">Running Component tool</div>
<div style="position:absolute;left:82px;top:990px;width:526px;height:103px;box-sizing:border-box;border:2px solid #363636;border-radius:16px;background:#1f1f1f;overflow:hidden"></div>
<div style="position:absolute;left:82px;top:990px;width:526px;height:48px;background:#363636;border-radius:16px 16px 0 0"></div>
<svg style="position:absolute;left:101px;top:1005px;" width="19" height="21" viewBox="0 0 19 21" fill="none"><path d="M11 2L3 11.5H9.5L7.5 19.5L16 9.5H9.5Z" stroke="#8f8f8f" stroke-width="1.8" stroke-linejoin="round"/></svg>
<div class="t" style="left:132.00px;top:1004.62px;font-size:22.53px;font-weight:700;color:#b0b0b0;transform:scaleX(0.8948);transform-origin:0 0;">Action</div>
<div class="t" style="left:99.63px;top:1054.49px;font-size:22.09px;font-weight:400;color:#d2d2d2;transform:scaleX(0.9685);transform-origin:0 0;">Close component view</div>
<svg style="position:absolute;left:81px;top:1114px;" width="26" height="26" viewBox="0 0 26 26" fill="none"><path d="M20.5 8.5A9.5 9.5 0 1 1 16.5 3" stroke="#3fc25c" stroke-width="2.2" stroke-linecap="round"/><path d="M7.5 11.5L11.2 15.2L21.5 4" stroke="#3fc25c" stroke-width="2.2" stroke-linecap="round" stroke-linejoin="round"/></svg>
<div class="t" style="left:117.52px;top:1114.97px;font-size:24.13px;font-weight:400;color:#a2a2a2;transform:scaleX(0.9817);transform-origin:0 0;">Component tool completed</div>
<div style="position:absolute;left:533px;top:1110px;width:75px;height:38px;background:#333;border-radius:8px"></div>
<div class="t" style="left:545.59px;top:1117.42px;font-size:22.53px;font-weight:400;color:#f5f5f5;transform:scaleX(0.9108);transform-origin:0 0;">27ms</div>
</div>
<svg style="position:absolute;left:2408px;top:99px;" width="28" height="30" viewBox="0 0 28 30" fill="none"><path d="M14 2L25.5 8.2V20.8L14 27L2.5 20.8V8.2Z" stroke="#c4c4c4" stroke-width="2" stroke-linejoin="round"/><path d="M2.5 8.2L14 14.5L25.5 8.2M14 14.5V27" stroke="#c4c4c4" stroke-width="2" stroke-linejoin="round"/></svg>
<div class="t" style="left:2445.98px;top:103.13px;font-size:23.11px;font-weight:400;color:#f5f5f5;transform:scaleX(1.0213);transform-origin:0 0;">Footer</div>
<svg style="position:absolute;left:2770px;top:110px;" width="24" height="8" viewBox="0 0 24 8" fill="none"><circle cx="3.5" cy="4" r="2.2" fill="#c4c4c4"/><circle cx="12" cy="4" r="2.2" fill="#c4c4c4"/><circle cx="20.5" cy="4" r="2.2" fill="#c4c4c4"/></svg>
<svg style="position:absolute;left:2816px;top:99px;" width="32" height="30" viewBox="0 0 32 30" fill="none"><path d="M23.5 13.5V8.2L12.5 2.2L1.8 8.2V20.5L12.5 26.5" stroke="#9a9a9a" stroke-width="2" stroke-linejoin="round"/><path d="M1.8 8.2L12.5 14.2L23.5 8.2M12.5 14.2V26.5" stroke="#9a9a9a" stroke-width="2" stroke-linejoin="round"/><path d="M23.8 17.8V27.3M19 22.5H28.6" stroke="#9a9a9a" stroke-width="2.2"/></svg>
<div class="t" style="left:2406.00px;top:161.64px;font-size:23.69px;font-weight:700;color:#fafafa;transform:scaleX(0.9744);transform-origin:0 0;">Style</div>
<div class="t" style="left:2494.00px;top:161.64px;font-size:23.69px;font-weight:700;color:#bdbdbd;transform:scaleX(0.9649);transform-origin:0 0;">Settings</div>
<div class="t" style="left:2616.03px;top:161.64px;font-size:23.69px;font-weight:700;color:#bdbdbd;transform:scaleX(0.9746);transform-origin:0 0;">Interactions</div>
<div style="position:absolute;left:2390px;top:206px;width:476px;height:2px;background:#3a3a3a"></div>
<div style="position:absolute;left:2406px;top:204px;width:55px;height:4px;background:#fafafa"></div>
<div class="t" style="left:2405.72px;top:230.68px;font-size:24.71px;font-weight:400;color:#c0c0c0;transform:scaleX(0.9819);transform-origin:0 0;">Style selector</div>
<div style="position:absolute;left:2406px;top:268px;width:448px;height:64px;box-sizing:border-box;border:2px solid #454545;border-radius:10px;background:#1f1f1f;box-shadow:inset 0 3px 4px rgba(0,0,0,.25)"></div>
<svg style="position:absolute;left:2420px;top:287px;" width="28" height="28" viewBox="0 0 28 28" fill="none"><circle cx="14" cy="14" r="11" stroke="#a0a0a0" stroke-width="2"/><path d="M6.5 21.5L21.5 6.5" stroke="#a0a0a0" stroke-width="2"/></svg>
<div class="t" style="left:2457.99px;top:288.85px;font-size:24.27px;font-weight:400;color:#a0a0a0;transform:scaleX(1.0150);transform-origin:0 0;">Double-click symbol to start editing</div>
<div style="position:absolute;left:2390px;top:384px;width:476px;height:2px;background:#3a3a3a"></div>
<div style="position:absolute;left:2414px;top:410px;width:432px;height:442px;background:#383838;border-radius:10px"></div>
<svg style="position:absolute;left:2582px;top:437px;" width="96" height="108" viewBox="0 0 96 108" fill="none"><path d="M48 2.5L92.5 28V80L48 105.5L3.5 80V28Z" stroke="#5e5e5e" stroke-width="2" stroke-linejoin="round"/><path d="M48 17L81 36V72L48 91L15 72V36Z" stroke="#fafafa" stroke-width="2.4" stroke-linejoin="round"/><path d="M15 36L48 55L81 36M48 55V91" stroke="#fafafa" stroke-width="2.4" stroke-linejoin="round"/></svg>
<div class="t" style="left:2543.66px;top:566.95px;font-size:24.27px;font-weight:700;color:#fafafa;transform:scaleX(0.9394);transform-origin:0 0;">Edit component</div>
<div class="t" style="left:2438.19px;top:606.89px;font-size:23.98px;font-weight:400;color:#c4c4c4;transform:scaleX(1.0073);transform-origin:0 0;"><span style="font-weight:700">Double-click</span><span style="font-weight:400"> the component to edit</span></div>
<div class="t" style="left:2472.21px;top:638.59px;font-size:23.98px;font-weight:400;color:#c4c4c4;transform:scaleX(0.9860);transform-origin:0 0;"><span style="font-weight:400">it — and update </span><span style="font-weight:700">13 instances</span></div>
<div class="t" style="left:2543.10px;top:670.09px;font-size:23.98px;font-weight:400;color:#c4c4c4;transform:scaleX(1.0021);transform-origin:0 0;">across your site.</div>
<div style="position:absolute;left:2439px;top:714px;width:383px;height:2px;background:#4c4c4c"></div>
<div class="t" style="left:2441.99px;top:736.19px;font-size:23.98px;font-weight:400;color:#c4c4c4;transform:scaleX(1.0103);transform-origin:0 0;">Or create override fields to edit this</div>
<div class="t" style="left:2440.28px;top:768.49px;font-size:23.98px;font-weight:400;color:#c4c4c4;transform:scaleX(1.0246);transform-origin:0 0;">instance’s content without affecting</div>
<div class="t" style="left:2544.18px;top:800.29px;font-size:23.98px;font-weight:400;color:#c4c4c4;transform:scaleX(1.0171);transform-origin:0 0;">other instances.</div>
</body></html>
